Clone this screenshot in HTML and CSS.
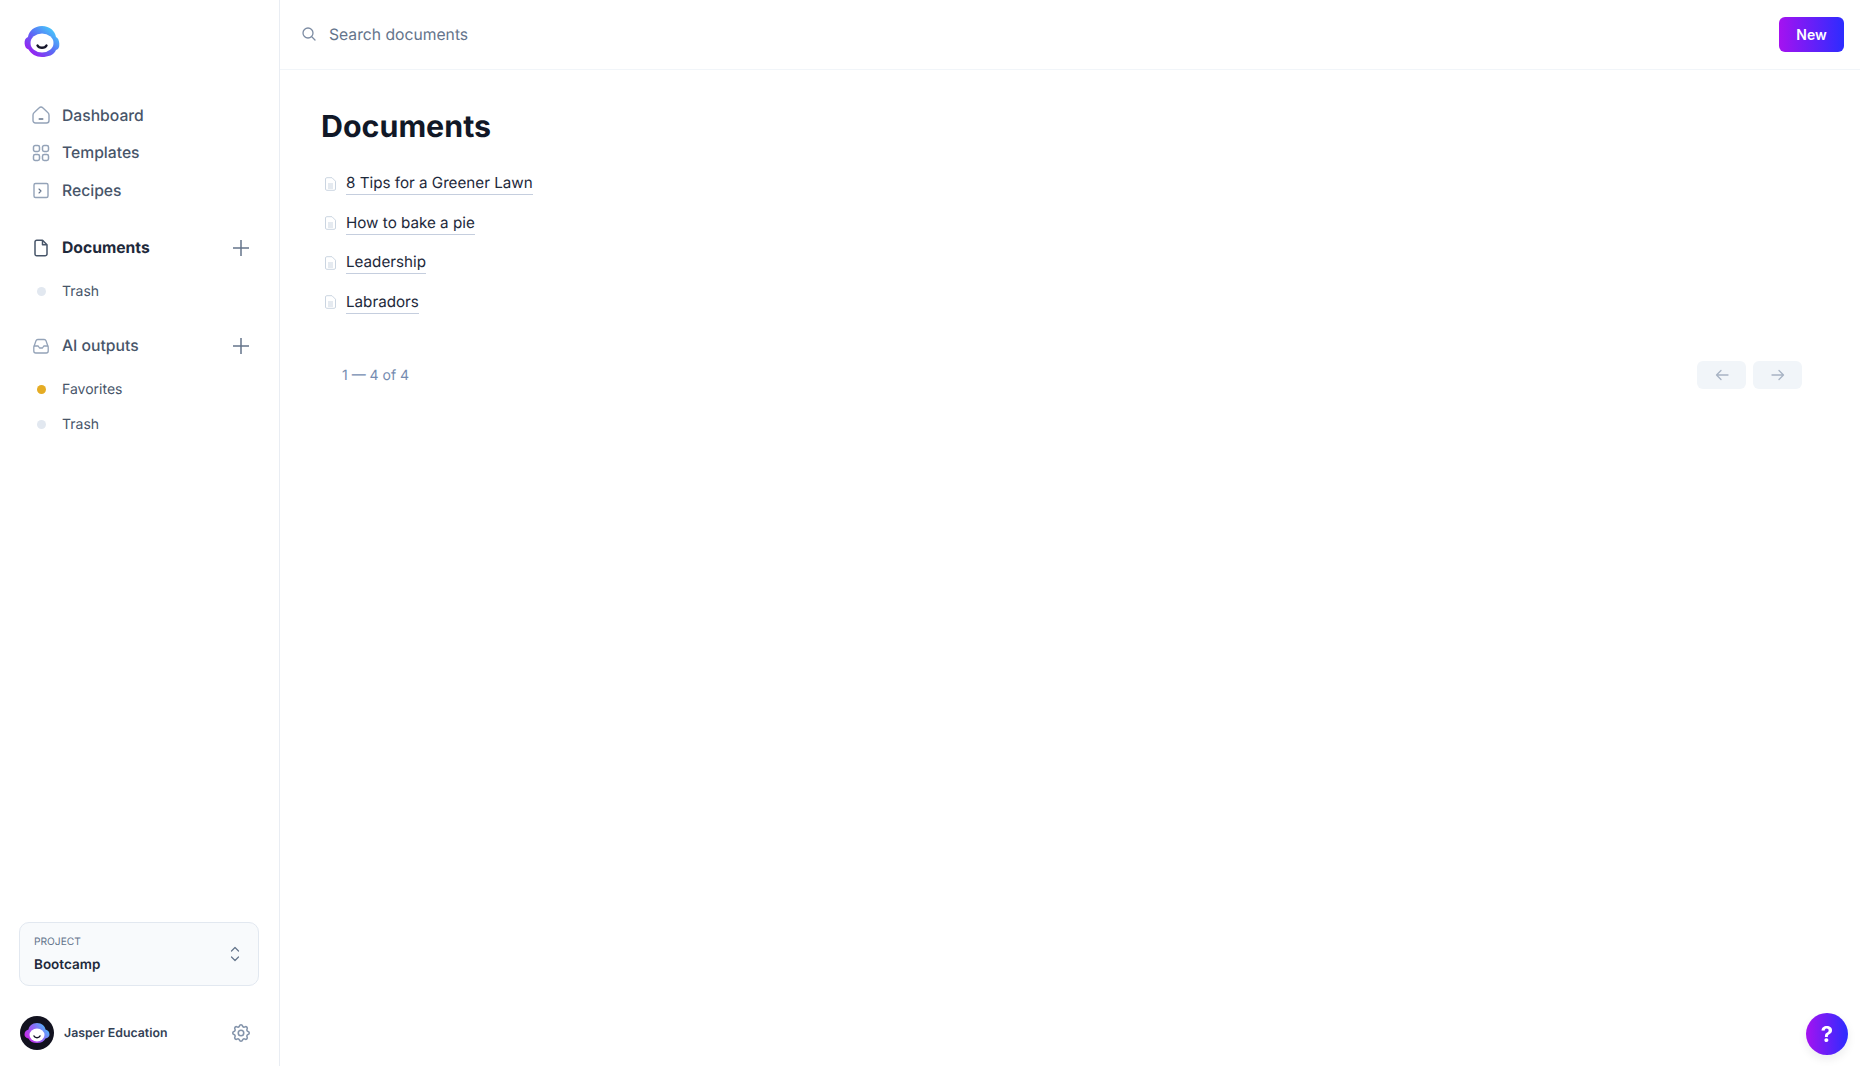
FILE: index.html
```html
<!DOCTYPE html>
<html lang="en">
<head>
  <meta charset="UTF-8" />
  <title>Documents</title>
  <meta name="viewport" content="width=device-width, initial-scale=1.0" />
  <link rel="stylesheet" href="styles.css">
</head>
<body>

<!-- Sidebar -->
<aside class="sidebar">
  <div class="logo">
    <svg width="36" height="32" viewBox="0 0 36 32">
      <defs>
        <linearGradient id="logoGrad" x1="0.1" y1="0.9" x2="0.9" y2="0.1">
          <stop offset="0" stop-color="#a015f0"/>
          <stop offset="0.5" stop-color="#5a6cf5"/>
          <stop offset="1" stop-color="#45d2fb"/>
        </linearGradient>
      </defs>
      <path d="M18 0C10 0 5 5 4 11C1.500 12 .4 14 .6 17.500C.8 21 2.500 23 4.500 23.500C7 28 12 31 18 31C24 31 30 29 32 24C34.500 23.500 35.500 21.500 35.300 17.500C35 14 34 12 32 11C31 5 26 0 18 0Z" fill="url(#logoGrad)"/>
      <ellipse cx="18" cy="17" rx="11.500" ry="9.500" fill="#fff"/>
      <path d="M13.500 19.500C15 22.500 21 22.500 22.500 19.500" fill="none" stroke="#16162a" stroke-width="2.400" stroke-linecap="round"/>
    </svg>
  </div>

  <nav class="nav-main">
    <a class="nav-item">
      <svg class="nav-icon" width="18" height="18" viewBox="0 0 18 18" fill="none" stroke="#94a3b8" stroke-width="1.400">
        <path d="M1 9C1 7.800 1.500 7 2.500 6.200L7 2C8.200 .9 9.800 .9 11 2L15.500 6.200C16.500 7 17 7.800 17 9V14.500C17 16 16 17 14.500 17H3.500C2 17 1 16 1 14.500Z"/>
        <path d="M7.200 13H10.800" stroke="#64748b" stroke-linecap="round"/>
      </svg>
      Dashboard
    </a>
    <a class="nav-item">
      <svg class="nav-icon" width="18" height="18" viewBox="0 0 18 18" fill="none" stroke="#94a3b8" stroke-width="1.500">
        <rect x="1.500" y="1.500" width="6" height="6" rx="1.700"/>
        <rect x="10.500" y="1.500" width="6" height="6" rx="1.700"/>
        <rect x="1.500" y="10.500" width="6" height="6" rx="1.700"/>
        <rect x="10.500" y="10.500" width="6" height="6" rx="1.700"/>
      </svg>
      Templates
    </a>
    <a class="nav-item">
      <svg class="nav-icon" width="18" height="18" viewBox="0 0 18 18" fill="none" stroke="#94a3b8" stroke-width="1.400">
        <rect x="2" y="2.500" width="14" height="14" rx="1.500"/>
        <path d="M7 8L9 10L7 12" stroke="#64748b" stroke-linecap="round" stroke-linejoin="round" stroke-width="1.100"/>
      </svg>
      Recipes
    </a>
  </nav>

  <section class="nav-group group-docs">
    <div class="group-head active">
      <svg class="nav-icon" width="18" height="18" viewBox="0 0 18 18" fill="none" stroke="#475569" stroke-width="1.500">
        <path d="M3 3C3 2 3.700 1.300 4.700 1.300H10.500L15 5.800V15C15 16 14.300 16.700 13.300 16.700H4.700C3.700 16.700 3 16 3 15Z" stroke-linejoin="round"/>
        <path d="M10.500 1.300V5.800H15" stroke-linejoin="round"/>
      </svg>
      <span class="group-label">Documents</span>
      <svg class="plus" width="18" height="18" viewBox="0 0 18 18" fill="none" stroke="#64748b" stroke-width="1.500">
        <path d="M9 1V17M1 9H17"/>
      </svg>
    </div>
    <a class="sub-item"><span class="dot"></span>Trash</a>
  </section>

  <section class="nav-group group-ai">
    <div class="group-head">
      <svg class="nav-icon" width="18" height="18" viewBox="0 0 18 18" fill="none" stroke="#94a3b8" stroke-width="1.300">
        <path d="M1.800 10V14C1.800 15.200 2.600 16 3.800 16H14.200C15.400 16 16.200 15.200 16.200 14V10L14 3.800C13.700 2.900 13.100 2.500 12.200 2.500H5.800C4.900 2.500 4.300 2.900 4 3.800Z" stroke-linejoin="round"/>
        <path d="M1.800 9H6.200L7.500 11H10.500L11.800 9H16.200" stroke-linejoin="round"/>
      </svg>
      <span class="group-label">AI outputs</span>
      <svg class="plus" width="18" height="18" viewBox="0 0 18 18" fill="none" stroke="#64748b" stroke-width="1.500">
        <path d="M9 1V17M1 9H17"/>
      </svg>
    </div>
    <a class="sub-item"><span class="dot dot-yellow"></span>Favorites</a>
    <a class="sub-item sub-tight"><span class="dot"></span>Trash</a>
  </section>

  <div class="spacer"></div>

  <div class="project">
    <div>
      <div class="project-label">PROJECT</div>
      <div class="project-name">Bootcamp</div>
    </div>
    <svg width="10" height="16" viewBox="0 0 10 16" fill="none" stroke="#64748b" stroke-width="1.200" stroke-linecap="round" stroke-linejoin="round">
      <path d="M1.500 5L5 1.500L8.500 5"/>
      <path d="M1.500 11L5 14.500L8.500 11"/>
    </svg>
  </div>

  <div class="account">
    <svg class="avatar" width="34" height="34" viewBox="0 0 34 34">
      <defs>
        <linearGradient id="avGrad" x1="0" y1="0.8" x2="1" y2="0.2">
          <stop offset="0" stop-color="#d020e8"/>
          <stop offset="0.55" stop-color="#8a6cf5"/>
          <stop offset="1" stop-color="#45c8fb"/>
        </linearGradient>
      </defs>
      <circle cx="17" cy="17" r="17" fill="#12121f"/>
      <path d="M17 7C12 7 9 10 8.500 13.500C6 14.200 4.500 16 4.500 18.500C4.500 20.500 6 22 8.500 22.500C10 25.500 13 27 17 27C21 27 24 25.500 25.500 22.500C28 22 29.500 20.500 29.500 18.500C29.500 16 28 14.200 25.500 13.500C25 10 22 7 17 7Z" fill="url(#avGrad)"/>
      <ellipse cx="17" cy="19" rx="7.500" ry="6.500" fill="#fff"/>
      <path d="M14 20C15 22.200 19 22.200 20 20" fill="none" stroke="#16162a" stroke-width="1.500" stroke-linecap="round"/>
    </svg>
    <span class="account-name">Jasper Education</span>
    <svg class="gear" width="22" height="22" viewBox="0 0 24 24" fill="none" stroke="#8494ab" stroke-width="1.700" stroke-linecap="round" stroke-linejoin="round">
      <path d="M10.325 4.317c.426-1.756 2.924-1.756 3.350 0a1.724 1.724 0 0 0 2.573 1.066c1.543-.940 3.310.826 2.370 2.370a1.724 1.724 0 0 0 1.065 2.572c1.756.426 1.756 2.924 0 3.350a1.724 1.724 0 0 0-1.066 2.573c.940 1.543-.826 3.310-2.370 2.370a1.724 1.724 0 0 0-2.572 1.065c-.426 1.756-2.924 1.756-3.350 0a1.724 1.724 0 0 0-2.573-1.066c-1.543.940-3.310-.826-2.370-2.370a1.724 1.724 0 0 0-1.065-2.572c-1.756-.426-1.756-2.924 0-3.350a1.724 1.724 0 0 0 1.066-2.573c-.940-1.543.826-3.310 2.370-2.370.996.608 2.296.070 2.572-1.065z"/>
      <circle cx="12" cy="12" r="3"/>
    </svg>
  </div>
</aside>

<!-- Main -->
<div class="main">
  <header class="topbar">
    <svg class="search-icon" width="16" height="16" viewBox="0 0 16 16" fill="none" stroke="#7d8ca3" stroke-width="1.300" stroke-linecap="round">
      <circle cx="7" cy="7" r="5"/>
      <path d="M11 11L14 14"/>
    </svg>
    <span class="search-text">Search documents</span>
    <button class="btn-new">New</button>
  </header>

  <main class="content">
    <h1>Documents</h1>
    <ul class="doc-list">
      <li><svg class="doc-icon" width="13" height="14" viewBox="0 0 13 14" fill="none" stroke="#cbd5e1" stroke-width="1"><path d="M1.500 2C1.500 1.200 2 .7 2.800 .7H8L11.500 4.200V12C11.500 12.800 11 13.300 10.200 13.300H2.800C2 13.300 1.500 12.800 1.500 12Z"/><path d="M4 7H9M4 9H9M4 11H9"/></svg><a>8 Tips for a Greener Lawn</a></li>
      <li><svg class="doc-icon" width="13" height="14" viewBox="0 0 13 14" fill="none" stroke="#cbd5e1" stroke-width="1"><path d="M1.500 2C1.500 1.200 2 .7 2.800 .7H8L11.500 4.200V12C11.500 12.800 11 13.300 10.200 13.300H2.800C2 13.300 1.500 12.800 1.500 12Z"/><path d="M4 7H9M4 9H9M4 11H9"/></svg><a>How to bake a pie</a></li>
      <li><svg class="doc-icon" width="13" height="14" viewBox="0 0 13 14" fill="none" stroke="#cbd5e1" stroke-width="1"><path d="M1.500 2C1.500 1.200 2 .7 2.800 .7H8L11.500 4.200V12C11.500 12.800 11 13.300 10.200 13.300H2.800C2 13.300 1.500 12.800 1.500 12Z"/><path d="M4 7H9M4 9H9M4 11H9"/></svg><a>Leadership</a></li>
      <li><svg class="doc-icon" width="13" height="14" viewBox="0 0 13 14" fill="none" stroke="#cbd5e1" stroke-width="1"><path d="M1.500 2C1.500 1.200 2 .7 2.800 .7H8L11.500 4.200V12C11.500 12.800 11 13.300 10.200 13.300H2.800C2 13.300 1.500 12.800 1.500 12Z"/><path d="M4 7H9M4 9H9M4 11H9"/></svg><a>Labradors</a></li>
    </ul>

    <div class="pager">
      <span class="pager-count">1 — 4 of 4</span>
      <div class="pager-btns">
        <button class="pager-btn"><svg width="14" height="12" viewBox="0 0 14 12" fill="none" stroke="#a8b3c4" stroke-width="1.300" stroke-linecap="round" stroke-linejoin="round"><path d="M13 6H1.500M6 1.500L1.500 6L6 10.500"/></svg></button>
        <button class="pager-btn"><svg width="14" height="12" viewBox="0 0 14 12" fill="none" stroke="#a8b3c4" stroke-width="1.300" stroke-linecap="round" stroke-linejoin="round"><path d="M1 6H12.500M8 1.500L12.500 6L8 10.500"/></svg></button>
      </div>
    </div>
  </main>
</div>

<button class="help">?</button>

</body>
</html>
```

FILE: styles.css
```css
* { box-sizing: border-box; }
body {
  margin: 0; height: 100vh; display: flex; overflow: hidden;
  font-family: Inter, "Liberation Sans", sans-serif;
  background: #fff; color: #1e293b;
  text-rendering: geometricPrecision;
}

/* sidebar */
.sidebar {
  width: 280px; flex: none; height: 100%;
  border-right: 1px solid #e9edf3;
  display: flex; flex-direction: column;
  padding: 0 19px;
}
.logo { padding: 26px 0 0 5px; height: 96px; }
.logo svg { display: block; }
.nav-main { display: flex; flex-direction: column; margin-top: .7px; }
.nav-item {
  display: flex; align-items: center; height: 37.500px;
  padding-left: 13px; gap: 12px;
  font-size: 15.700px; font-weight: 500; color: #475569;
}
.nav-icon { flex: none; }
.nav-group { display: flex; flex-direction: column; }
.group-docs { margin-top: 19.800px; }
.group-ai { margin-top: 18px; }
.group-head {
  display: flex; align-items: center; height: 38px;
  padding-left: 13px; gap: 12px;
  font-size: 15.700px; font-weight: 500; color: #475569;
}
.group-head.active { font-weight: 700; color: #1e293b; }
.group-label { flex: 1; }
.plus { margin-right: 10px; }
.sub-item {
  display: flex; align-items: center; height: 35px; margin-top: 7px;
  padding-left: 18px; gap: 16px;
  font-size: 14px; color: #475569;
}
.sub-tight { margin-top: 0; }
.dot { width: 9px; height: 9px; border-radius: 50%; background: #e2e8f0; flex: none; }
.dot-yellow { background: #e5ac24; }
.spacer { flex: 1; }

.project {
  height: 64px; width: 240px; margin-bottom: 30px;
  border: 1px solid #e2e8f0; border-radius: 10px; background: #f8fafc;
  display: flex; align-items: center; justify-content: space-between;
  padding: 0 18px 0 14px;
}
.project-label { font-size: 10.200px; color: #64748b; line-height: 14px; margin-top: 1px; }
.project-name { font-size: 13.500px; font-weight: 600; color: #1e293b; line-height: 18px; margin-top: 7px; }

.account {
  display: flex; align-items: center; height: 34px; margin-bottom: 16px;
  padding-left: 1px;
}
.avatar { flex: none; }
.account-name { flex: 1; margin: -1px 0 0 10px; font-size: 12.300px; font-weight: 600; color: #334155; }
.gear { margin-right: 8px; }

/* main */
.main { flex: 1; min-width: 0; display: flex; flex-direction: column; }
.topbar {
  height: 70px; flex: none;
  border-bottom: 1px solid #f1f5f9;
  display: flex; align-items: center;
  padding: 0 16px 0 21px;
}
.search-icon { flex: none; margin-top: -1px; }
.search-text { flex: 1; margin: -1px 0 0 12px; font-size: 15.700px; color: #64748b; }
.btn-new {
  width: 65px; height: 35px; border: 0; border-radius: 6px;
  background: linear-gradient(90deg, #a512f0, #2c2cff);
  color: #fff; font: 600 14px Inter, "Liberation Sans", sans-serif;
}

.content { padding: 0 58px 0 41px; }
h1 { margin: 0; padding-top: 38px; font-size: 30.400px; line-height: 38px; font-weight: 700; color: #111827; }
.doc-list { list-style: none; margin: 18px 0 0; padding: 0; }
.doc-list li { display: flex; align-items: center; height: 39.500px; padding-left: 3px; }
.doc-icon { flex: none; margin-right: 9px; }
.doc-list a {
  font-size: 15.200px; line-height: 21px; color: #1e293b;
  padding-bottom: 1px;
  border-bottom: 1px solid #c5cede;
}
.pager {
  display: flex; align-items: center; justify-content: space-between;
  margin-top: 39px; padding-left: 21px; height: 28px;
}
.pager-count { font-size: 14px; color: #748bb0; }
.pager-btns { display: flex; gap: 7px; }
.pager-btn {
  width: 49px; height: 28px; padding: 0; border: 0; border-radius: 6px;
  background: #f1f5f9;
  display: flex; align-items: center; justify-content: center;
}

.help {
  position: fixed; right: 12px; bottom: 11px;
  width: 42px; height: 42px; border: 0; border-radius: 50%;
  background: linear-gradient(90deg, #a512f0, #2c2cff);
  color: #fff; font: 700 22px Inter, "Liberation Sans", sans-serif;
  box-shadow: 0 4px 10px rgba(15, 23, 42, .08);
}
```
